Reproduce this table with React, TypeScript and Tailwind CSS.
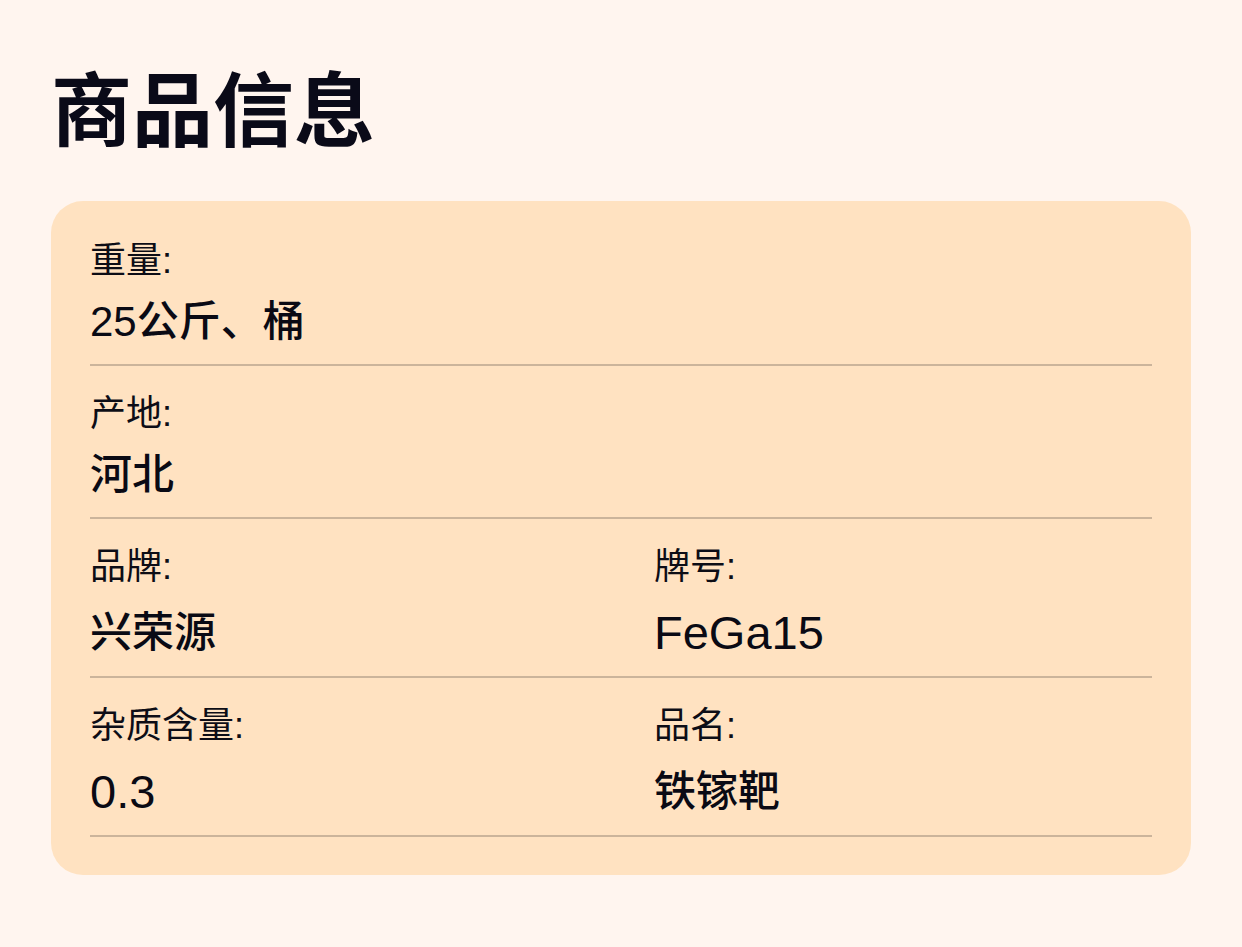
import React from 'react';

type Field = {
  label: string;
  value: string;
  latin?: boolean;
};

const rows: Field[][] = [
  [{ label: '重量:', value: '25公斤、桶' }],
  [{ label: '产地:', value: '河北' }],
  [
    { label: '品牌:', value: '兴荣源' },
    { label: '牌号:', value: 'FeGa15', latin: true },
  ],
  [
    { label: '杂质含量:', value: '0.3', latin: true },
    { label: '品名:', value: '铁镓靶' },
  ],
];

function FieldItem({ field, double }: { field: Field; double: boolean }) {
  return (
    <div>
      <div className="text-[36px] leading-[36px] text-[#0d0d16]">{field.label}</div>
      <div
        className={`leading-[44px] text-[#0a0a14] ${double ? 'mt-[26px]' : 'mt-[21px]'} ${
          field.latin ? 'text-[47px] font-normal' : 'text-[42px] font-medium'
        }`}
      >
        {field.value}
      </div>
    </div>
  );
}

export default function App() {
  return (
    <div
      className="min-h-screen bg-[#fff5ef] px-[51px] pt-[72px] pb-[72px]"
      style={{ fontFamily: '"Liberation Sans", "Noto Sans CJK SC", sans-serif' }}
    >
      <h1 className="text-[81px] font-bold leading-none text-[#0a0a18]">商品信息</h1>

      <section className="mt-[48px] rounded-[32px] bg-[#ffe2c1] px-[39px] pt-[12px] pb-[38px]">
        {rows.map((row, i) => {
          const double = row.length > 1;
          return (
            <div
              key={i}
              className={`border-b-2 border-[#cbb49b] pt-[30px] ${
                double ? 'grid grid-cols-2 gap-x-[66px] pb-[21px]' : 'pb-[20px]'
              }`}
            >
              {row.map((field) => (
                <FieldItem key={field.label} field={field} double={double} />
              ))}
            </div>
          );
        })}
      </section>
    </div>
  );
}
